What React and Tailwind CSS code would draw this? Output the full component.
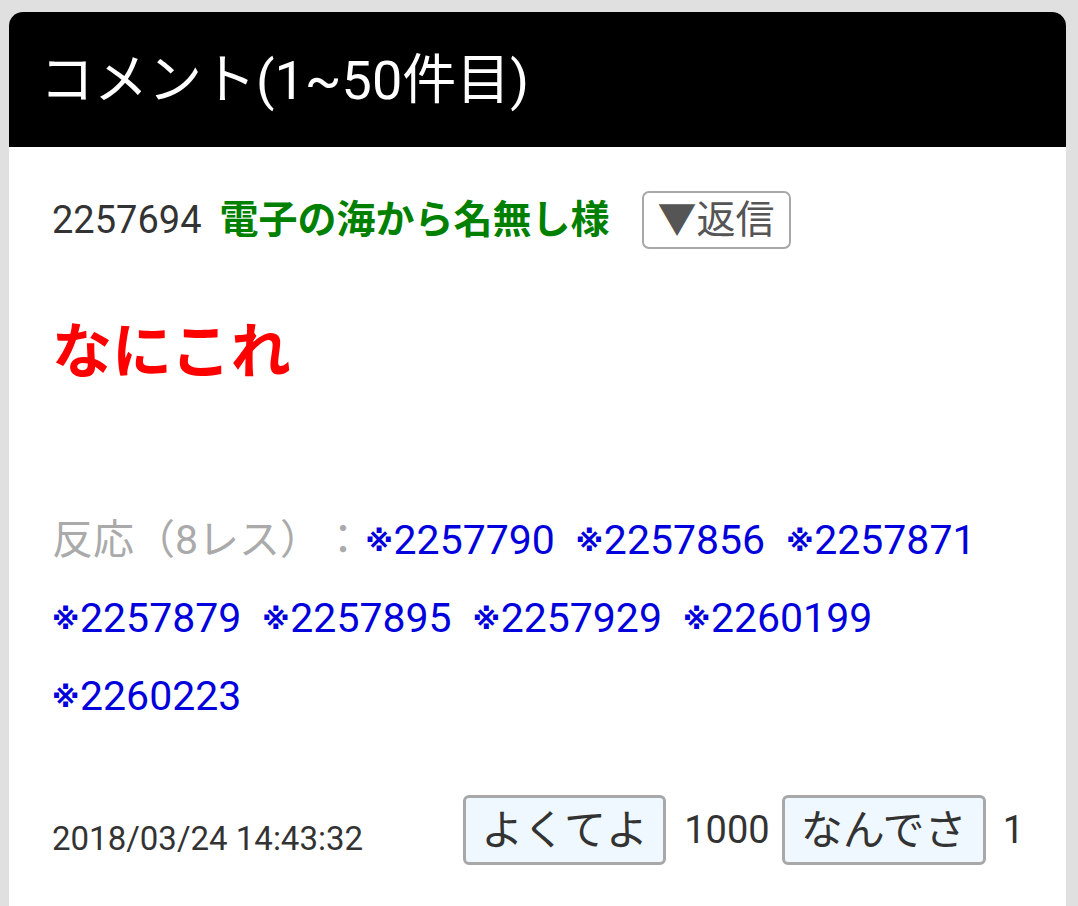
import React from "react";

const FONT = { fontFamily: 'Roboto, "Noto Sans CJK JP", sans-serif' };

const links = [
  "2257790",
  "2257856",
  "2257871",
  "2257879",
  "2257895",
  "2257929",
  "2260199",
  "2260223",
];

function Mark() {
  return (
    <span className="inline-block w-[28px] text-[28px] font-bold align-[3px]" style={{ fontFamily: '"DejaVu Sans", sans-serif' }}>
      ※
    </span>
  );
}

export default function App() {
  return (
    <div className="min-h-screen bg-[#e0e0e0] pt-[12px]" style={FONT}>
      <div className="ml-[9px] w-[1057px] min-h-[894px] bg-white rounded-t-[14px] overflow-hidden">
        <div className="h-[135px] bg-black flex items-center pl-[31px] pt-[3px]">
          <h1 className="text-white text-[54px] leading-none font-normal">コメント(1~50件目)</h1>
        </div>
        <div className="pl-[43px] pr-[42px]">
          <div className="mt-[44px] h-[58px] flex items-center">
            <span className="text-[38px] text-[#333]">2257694</span>
            <span className="ml-[18px] text-[39px] font-bold text-[#008000]">電子の海から名無し様</span>
            <button className="ml-[32px] h-[58px] px-[14px] border-2 border-[#a8a8a8] rounded-[7px] bg-white text-[39px] text-[#555] leading-none flex items-center">
              ▼返信
            </button>
          </div>
          <div className="mt-[68px] text-[60px] leading-[72px] font-bold text-[#ff0000]">なにこれ</div>
          <div className="mt-[113px] text-[41px] leading-[77px]">
            <span className="text-[#aaa] mr-[2px]">
              反応（8レス）<span className="ml-[22px]">：</span>
            </span>
            {links.map((l) => (
              <span key={l} className="inline-block mr-[21px] text-[#0000dd]">
                <Mark />
                {l}
              </span>
            ))}
          </div>
          <div className="mt-[59px] h-[70px] flex items-center justify-between">
            <span className="text-[33px] text-[#333] pt-[18px]">2018/03/24 14:43:32</span>
            <div className="flex items-center">
              <button className="h-[70px] w-[203px] border-[3px] border-[#a8a8a8] rounded-[6px] bg-[#f0f8ff] text-[42px] text-[#333] flex items-center justify-center">
                よくてよ
              </button>
              <span className="ml-[18px] mr-[12px] text-[38px] text-[#333]">1000</span>
              <button className="h-[70px] w-[204px] border-[3px] border-[#a8a8a8] rounded-[6px] bg-[#f0f8ff] text-[42px] text-[#333] flex items-center justify-center">
                なんでさ
              </button>
              <span className="ml-[17px] text-[38px] text-[#333]">1</span>
            </div>
          </div>
        </div>
      </div>
    </div>
  );
}
